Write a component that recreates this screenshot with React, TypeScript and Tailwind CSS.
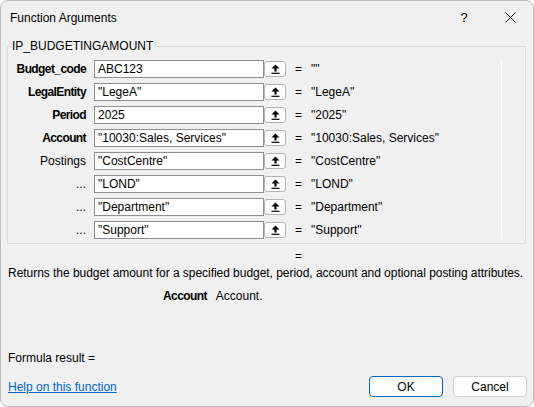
import React from "react";

interface ArgRow {
  label: string;
  bold: boolean;
  value: string;
  result: string;
}

const rows: ArgRow[] = [
  { label: "Budget_code", bold: true, value: "ABC123", result: '""' },
  { label: "LegalEntity", bold: true, value: '"LegeA"', result: '"LegeA"' },
  { label: "Period", bold: true, value: "2025", result: '"2025"' },
  { label: "Account", bold: true, value: '"10030:Sales, Services"', result: '"10030:Sales, Services"' },
  { label: "Postings", bold: false, value: '"CostCentre"', result: '"CostCentre"' },
  { label: "...", bold: false, value: '"LOND"', result: '"LOND"' },
  { label: "...", bold: false, value: '"Department"', result: '"Department"' },
  { label: "...", bold: false, value: '"Support"', result: '"Support"' },
];

function RefIcon() {
  return (
    <svg width="9" height="10" viewBox="0 0 9 10">
      <path d="M4.5 0.5 L8.5 4.5 L5.6 4.5 L5.6 7.6 L3.4 7.6 L3.4 4.5 L0.5 4.5 Z" fill="#000" />
      <rect x="0.5" y="8.7" width="8" height="1.2" fill="#000" />
    </svg>
  );
}

export default function App() {
  return (
    <div className="w-[534px] h-[407px] bg-[#f0f0f0] border border-[#bdbdbd] rounded-[8px] overflow-hidden flex flex-col text-[12px] leading-[14px] text-black font-['Liberation_Sans',Arial,sans-serif]">
      {/* Title bar */}
      <div className="h-[33px] flex items-center shrink-0">
        <span className="pl-[9px]">Function Arguments</span>
        <div className="ml-auto flex h-full">
          <div className="w-[46px] flex items-center justify-center text-[13px]">?</div>
          <div className="w-[46px] flex items-center justify-center">
            <svg width="11" height="11" viewBox="0 0 11 11">
              <path d="M0.5 0.5 L10.5 10.5 M10.5 0.5 L0.5 10.5" stroke="#1a1a1a" strokeWidth="1" />
            </svg>
          </div>
        </div>
      </div>

      {/* Argument group */}
      <fieldset className="ml-[6px] mt-[5px] w-[519px] border border-[#dcdcdc] pb-[4px] pt-[7px]">
        <legend className="ml-[3px] px-[1px] leading-[14px]">IP_BUDGETINGAMOUNT</legend>
        <div className="w-[494px] border-r border-white flex flex-col gap-[5px]">
          {rows.map((r, i) => (
            <div key={i} className="flex items-center h-[18px]">
              <div className={`w-[78px] text-right ${r.bold ? "font-bold tracking-[-0.6px]" : ""}`}>{r.label}</div>
              <div className="ml-[8px] w-[170px] h-[18px] bg-white border border-[#8f8f8f] pl-[3px] flex items-center">
                {r.value}
              </div>
              <div className="w-[22px] h-[16px] bg-[#fdfdfd] border border-[#b3b3b3] rounded-[3px] flex items-center justify-center">
                <RefIcon />
              </div>
              <span className="ml-[9px] w-[7px]">=</span>
              <span className="ml-[9px]">{r.result}</span>
            </div>
          ))}
        </div>
      </fieldset>

      {/* Description */}
      <div className="mt-[5px] pl-[294px]">=</div>
      <div className="mt-[3px] pl-[7px] whitespace-nowrap tracking-[-0.04px]">
        Returns the budget amount for a specified budget, period, account and optional posting attributes.
      </div>
      <div className="mt-[9px] flex pl-[162px] gap-[9px]">
        <span className="font-bold tracking-[-0.6px]">Account</span>
        <span>Account.</span>
      </div>

      <div className="mt-[48px] pl-[7px]">Formula result =</div>

      <div className="mt-[11px] flex items-center h-[21px] pl-[7px] pr-[6px]">
        <a className="text-[#0066cc] underline cursor-pointer">Help on this function</a>
        <div className="ml-auto flex gap-[10px]">
          <button className="w-[74px] h-[21px] bg-[#fdfdfd] border border-[#0067c0] rounded-[4px] leading-[14px]">
            OK
          </button>
          <button className="w-[74px] h-[21px] bg-[#fdfdfd] border border-[#d0d0d0] rounded-[4px] leading-[14px]">
            Cancel
          </button>
        </div>
      </div>
    </div>
  );
}
